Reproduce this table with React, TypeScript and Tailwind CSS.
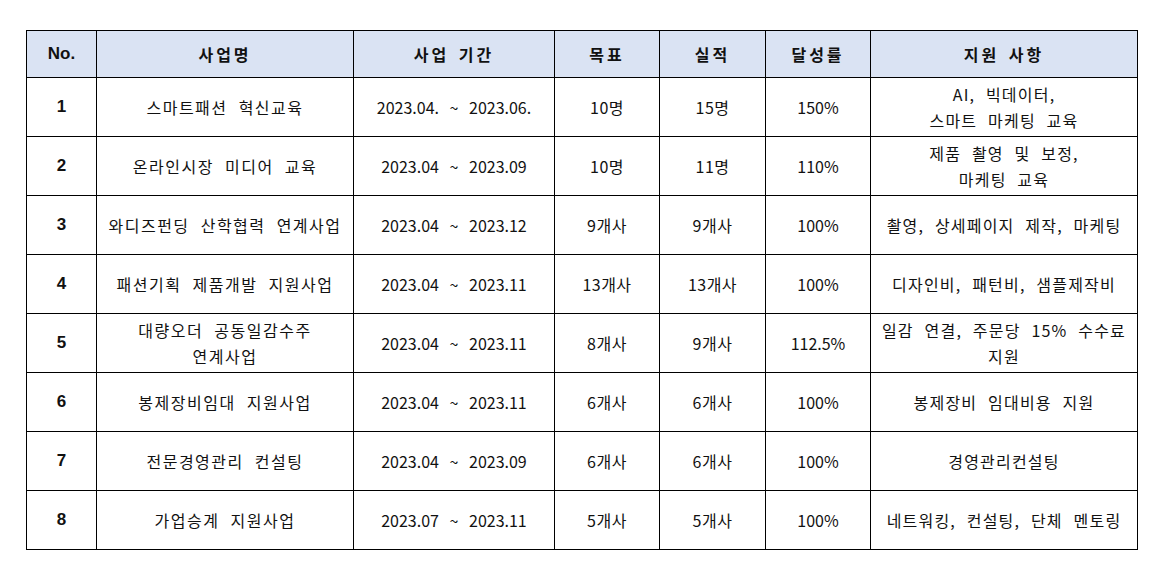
const rows = [
  ["1", "스마트패션 혁신교육", "2023.04. ~ 2023.06.", "10명", "15명", "150%", "AI, 빅데이터,\n스마트 마케팅 교육"],
  ["2", "온라인시장 미디어 교육", "2023.04 ~ 2023.09", "10명", "11명", "110%", "제품 촬영 및 보정,\n마케팅 교육"],
  ["3", "와디즈펀딩 산학협력 연계사업", "2023.04 ~ 2023.12", "9개사", "9개사", "100%", "촬영, 상세페이지 제작, 마케팅"],
  ["4", "패션기획 제품개발 지원사업", "2023.04 ~ 2023.11", "13개사", "13개사", "100%", "디자인비, 패턴비, 샘플제작비"],
  ["5", "대량오더 공동일감수주\n연계사업", "2023.04 ~ 2023.11", "8개사", "9개사", "112.5%", "일감 연결, 주문당 15% 수수료\n지원"],
  ["6", "봉제장비임대 지원사업", "2023.04 ~ 2023.11", "6개사", "6개사", "100%", "봉제장비 임대비용 지원"],
  ["7", "전문경영관리 컨설팅", "2023.04 ~ 2023.09", "6개사", "6개사", "100%", "경영관리컨설팅"],
  ["8", "가업승계 지원사업", "2023.07 ~ 2023.11", "5개사", "5개사", "100%", "네트워킹, 컨설팅, 단체 멘토링"],
]

const heads = ["No.", "사업명", "사업 기간", "목표", "실적", "달성률", "지원 사항"]
const widths = ["w-[70px]", "w-[257px]", "w-[201px]", "w-[105px]", "w-[106px]", "w-[105px]", "w-[267px]"]

// per column text tweaks
const cellStyle = [
  "font-bold font-['Liberation_Sans',sans-serif] text-[17px]",
  "tracking-[1.5px] [word-spacing:6px]",
  "[word-spacing:7px]",
  "tracking-[0.5px]",
  "tracking-[0.5px]",
  "",
  "tracking-[1.2px] [word-spacing:6px]",
]

export default function App() {
  return (
    <div className="w-[1164px] h-[580px] bg-white pt-[30px] pl-[26px] font-['Noto_Sans_CJK_KR','Noto_Sans',sans-serif] text-[#111]">
      <table className="table-fixed border-collapse w-[1111px] text-[16px] leading-[26px]">
        <thead>
          <tr className="h-[47px] bg-[#dae3f3]">
            {heads.map((h, i) => (
              <th
                key={h}
                className={`${widths[i]} border border-black font-bold text-center ${
                  i === 0 ? "font-['Liberation_Sans',sans-serif] text-[17px]" : "tracking-[3px] [word-spacing:3px]"
                }`}
              >
                {h}
              </th>
            ))}
          </tr>
        </thead>
        <tbody>
          {rows.map(r => (
            <tr key={r[0]} className="h-[59px]">
              {r.map((c, i) => (
                <td key={i} className={`border border-black text-center whitespace-pre-line ${cellStyle[i]}`}>
                  {c}
                </td>
              ))}
            </tr>
          ))}
        </tbody>
      </table>
    </div>
  )
}
